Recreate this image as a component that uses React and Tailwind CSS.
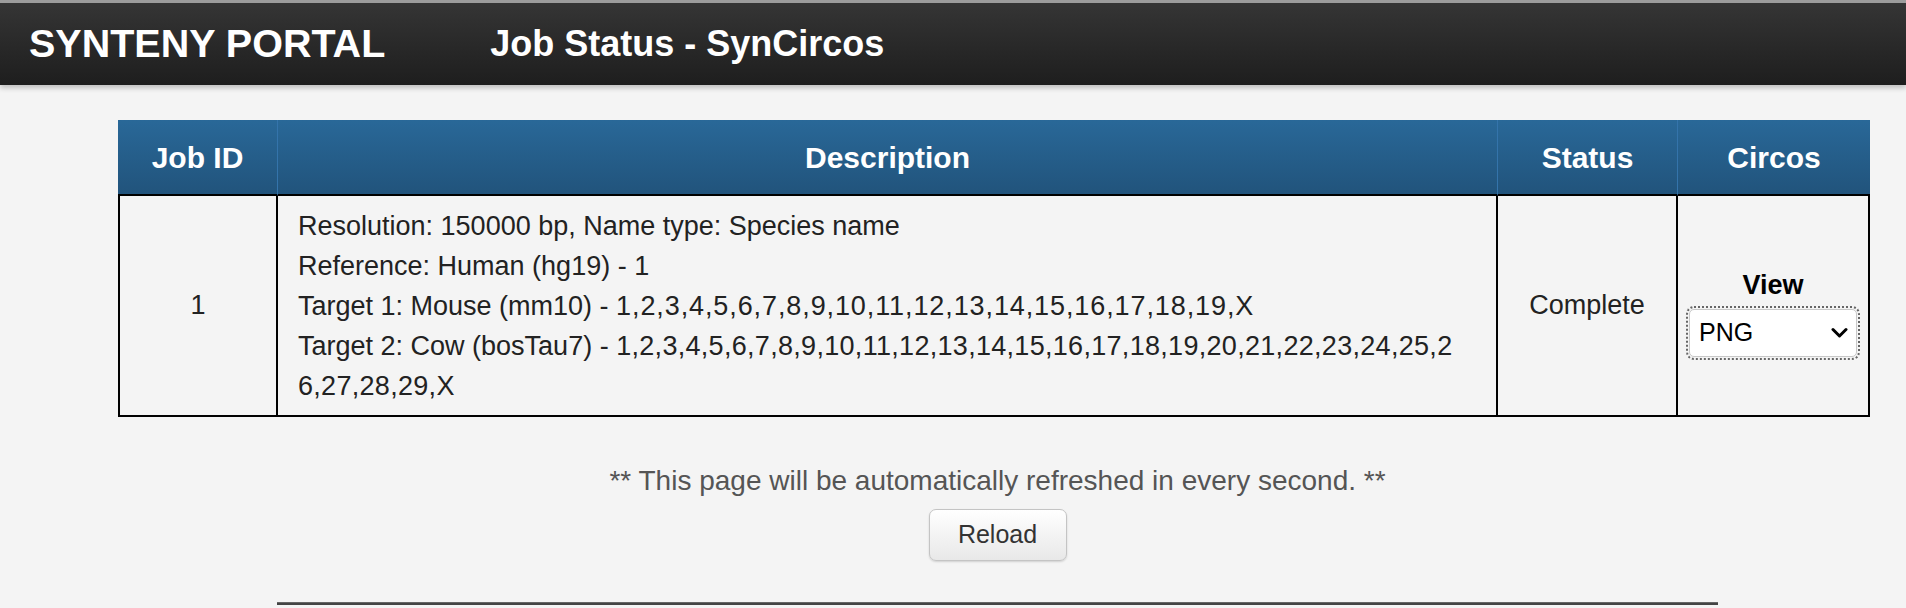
import React from "react";

export default function App() {
  return (
    <div className="min-h-screen bg-[#f4f4f4] font-['Liberation_Sans',Arial,sans-serif] text-[#222]">
      <header className="h-[85px] border-t-[3px] border-[#9c9c9c] bg-gradient-to-b from-[#353535] to-[#1e1e1e] shadow-[0_3px_5px_rgba(0,0,0,0.22)] flex items-center">
        <div className="pl-[29px] text-white font-bold text-[39.5px] leading-none">SYNTENY PORTAL</div>
        <div className="ml-[105px] text-white font-bold text-[36px] leading-none">Job Status - SynCircos</div>
      </header>

      <main className="pl-[118px] pr-[36px] pt-[35px]">
        <table className="w-full table-fixed border-separate border-spacing-0">
          <colgroup>
            <col className="w-[160px]" />
            <col />
            <col className="w-[180px]" />
            <col className="w-[192px]" />
          </colgroup>
          <thead>
            <tr className="bg-gradient-to-b from-[#296898] to-[#21537b]">
              <th className="h-[76px] border-b-2 border-b-black border-r border-r-[#3474ab] text-white font-bold text-[30px] text-center">Job ID</th>
              <th className="border-b-2 border-b-black border-r border-r-[#3474ab] text-white font-bold text-[30px] text-center">Description</th>
              <th className="border-b-2 border-b-black border-r border-r-[#3474ab] text-white font-bold text-[30px] text-center">Status</th>
              <th className="border-b-2 border-b-black text-white font-bold text-[30px] text-center">Circos</th>
            </tr>
          </thead>
          <tbody>
            <tr>
              <td className="border-l-2 border-r-2 border-b-2 border-black text-center align-middle text-[27px]">1</td>
              <td className="border-r-2 border-b-2 border-black pl-[20px] pr-[20px] pt-[10px] pb-[9px] text-[27px] leading-[40px]">
                <div>Resolution: 150000 bp, Name type: Species name</div>
                <div>Reference: Human (hg19) - 1</div>
                <div>Target 1: Mouse (mm10) - <span className="tracking-[0.9px]">1,2,3,4,5,6,7,8,9,10,11,12,13,14,15,16,17,18,19,X</span></div>
                <div>
                  Target 2: Cow (bosTau7) - <span className="tracking-[0.3px]">1,2,3,4,5,6,7,8,9,10,11,12,13,14,15,16,17,18,19,20,21,22,23,24,25,2</span>
                  <br />
                  <span className="tracking-[0.3px]">6,27,28,29,X</span>
                </div>
              </td>
              <td className="border-r-2 border-b-2 border-black text-center align-middle text-[27px]">Complete</td>
              <td className="border-r-2 border-b-2 border-black align-middle pt-[11px]">
                <div className="flex flex-col items-center">
                  <label className="font-bold text-[27px] leading-[40px] text-black">View</label>
                  <div className="relative mt-[4px] outline-2 outline-dotted outline-[#666] outline-offset-[1px] rounded-[5px]">
                    <select className="appearance-none block w-[168px] h-[48px] bg-white border border-[#c8c8c8] rounded-[5px] pl-[9px] text-[25px] text-black font-['Liberation_Sans',Arial,sans-serif]" defaultValue="PNG">
                      <option>PNG</option>
                      <option>SVG</option>
                    </select>
                    <svg className="pointer-events-none absolute right-[9px] top-[18px]" width="17" height="12" viewBox="0 0 17 12">
                      <path d="M2 2.5 L8.5 9 L15 2.5" fill="none" stroke="#000" strokeWidth="3" strokeLinecap="round" strokeLinejoin="round" />
                    </svg>
                  </div>
                </div>
              </td>
            </tr>
          </tbody>
        </table>

        <div className="pl-[7px]">
          <p className="mt-[44px] text-center text-[28px] leading-[40px] text-[#555]">** This page will be automatically refreshed in every second. **</p>
          <div className="flex justify-center mt-[8px]">
            <button className="w-[138px] h-[52px] rounded-[7px] border border-[#c4c4c4] bg-gradient-to-b from-white to-[#e8e8e8] shadow-[0_1px_2px_rgba(0,0,0,0.15)] text-[25px] text-[#333]">Reload</button>
          </div>
          <hr className="mt-[41px] mx-auto w-[1441px] border-0 h-[3px] bg-[#444] border-t border-[#666]" />
        </div>
      </main>
    </div>
  );
}
